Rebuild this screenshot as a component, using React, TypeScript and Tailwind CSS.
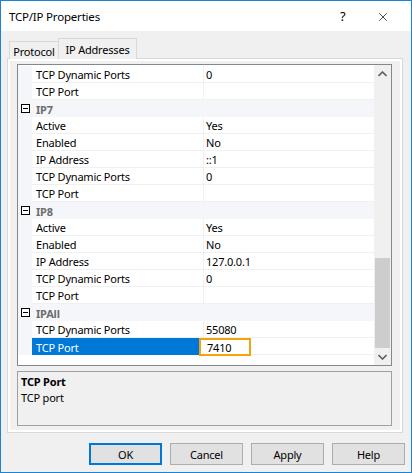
import { X } from "lucide-react";

type Row =
  | { kind: "cat"; label: string }
  | { kind: "prop"; label: string; value?: string; selected?: boolean };

const rows: Row[] = [
  { kind: "prop", label: "TCP Dynamic Ports", value: "0" },
  { kind: "prop", label: "TCP Port" },
  { kind: "cat", label: "IP7" },
  { kind: "prop", label: "Active", value: "Yes" },
  { kind: "prop", label: "Enabled", value: "No" },
  { kind: "prop", label: "IP Address", value: "::1" },
  { kind: "prop", label: "TCP Dynamic Ports", value: "0" },
  { kind: "prop", label: "TCP Port" },
  { kind: "cat", label: "IP8" },
  { kind: "prop", label: "Active", value: "Yes" },
  { kind: "prop", label: "Enabled", value: "No" },
  { kind: "prop", label: "IP Address", value: "127.0.0.1" },
  { kind: "prop", label: "TCP Dynamic Ports", value: "0" },
  { kind: "prop", label: "TCP Port" },
  { kind: "cat", label: "IPAll" },
  { kind: "prop", label: "TCP Dynamic Ports", value: "55080" },
  { kind: "prop", label: "TCP Port", value: "7410", selected: true },
];

const font = { fontFamily: '"Noto Sans", "Segoe UI", sans-serif' };

const Chevron = ({ up }: { up?: boolean }) => (
  <svg width="9" height="6" viewBox="0 0 9 6" className={up ? "" : "rotate-180"}>
    <path d="M0.5 5 L4.5 1 L8.5 5" fill="none" stroke="#606060" strokeWidth="1.6" />
  </svg>
);

const GridRow = ({ row }: { row: Row }) => {
  if (row.kind === "cat") {
    return (
      <div className="flex h-[17px] items-center bg-[#f4f6fa]">
        <div className="flex w-[14px] justify-center pl-px">
          <div className="flex h-[9px] w-[9px] items-center justify-center border border-black bg-white">
            <div className="h-px w-[5px] bg-black" />
          </div>
        </div>
        <span className="pl-[4px] pt-px font-bold text-[#6d6d6d]">{row.label}</span>
      </div>
    );
  }
  return (
    <div className="relative flex h-[17px]">
      <div className="w-[14px] bg-[#f4f6fa]" />
      <div
        className={`flex w-[171px] items-center pl-[4px] pt-px ${
          row.selected ? "bg-[#0078d7] text-white" : "border-b border-[#f0f0f0]"
        }`}
      >
        {row.label}
      </div>
      <div className="flex flex-1 items-center border-b border-l border-[#f0f0f0] pl-[2px] pt-px">
        {row.value}
      </div>
      {row.selected && (
        <div className="absolute left-[181px] top-0 flex h-[18px] w-[52px] items-center border-2 border-[#f5a30a] bg-white pl-[6px] pt-px">
          {row.value}
        </div>
      )}
    </div>
  );
};

export default function App() {
  return (
    <div
      style={font}
      className="flex h-[473px] w-[412px] flex-col border border-[#1883d7] bg-[#f0f0f0] text-[11px] leading-none tracking-[-0.2px] text-black"
    >
      {/* Title bar */}
      <div className="flex h-[30px] items-center bg-white pl-[8px] pt-px">
        <span className="flex-1 text-[11.5px]">TCP/IP Properties</span>
        <span className="w-[36px] text-[13px]">?</span>
        <X className="mr-[21px] h-[14px] w-[14px]" strokeWidth={1.2} />
      </div>

      {/* Tabs */}
      <div className="relative z-10 -mb-px mt-[7px] flex h-[21px] items-end pl-[8px]">
        <div className="flex h-[18px] w-[50px] items-center justify-center border border-b-0 border-[#d9d9d9] bg-[#f0f0f0] pt-px">
          Protocol
        </div>
        <div className="-ml-px flex h-[21px] w-[79px] items-center justify-center border border-b-0 border-[#d9d9d9] bg-[#f0f0f0] pt-px">
          IP Addresses
        </div>
      </div>

      {/* Tab panel */}
      <div className="ml-[6px] w-[396px] border border-[#d9d9d9] bg-white p-[2px]">
        <div className="flex flex-col bg-[#f0f0f0] pb-[4px] pl-[7px] pt-[3px]">
          <div className="flex h-[302px] w-[375px] border border-[#828790] bg-white">
            <div className="flex-1 pt-px">
              {rows.map((r, i) => (
                <GridRow key={i} row={r} />
              ))}
            </div>
            <div className="flex w-[17px] flex-col bg-[#f0f0f0]">
              <div className="flex h-[17px] items-center justify-center">
                <Chevron up />
              </div>
              <div className="flex-1 px-px">
                <div className="mt-[176px] h-[90px] bg-[#cdcdcd]" />
              </div>
              <div className="flex h-[17px] items-center justify-center">
                <Chevron />
              </div>
            </div>
          </div>

          {/* Description */}
          <div className="mt-[5px] h-[55px] w-[375px] border border-[#a0a0a0] bg-[#f0f0f0] px-[3px] pt-[4px]">
            <div className="font-bold">TCP Port</div>
            <div className="mt-[5px]">TCP port</div>
          </div>
        </div>
      </div>

      {/* Buttons */}
      <div className="mt-[10px] flex justify-end gap-[8px] pr-[6px]">
        {["OK", "Cancel", "Apply", "Help"].map((b) => (
          <button
            key={b}
            className={`flex h-[22px] w-[73px] items-center justify-center bg-[#e1e1e1] pt-px ${
              b === "OK" ? "border-2 border-[#0078d7]" : "border border-[#adadad]"
            }`}
          >
            {b}
          </button>
        ))}
      </div>
    </div>
  );
}
